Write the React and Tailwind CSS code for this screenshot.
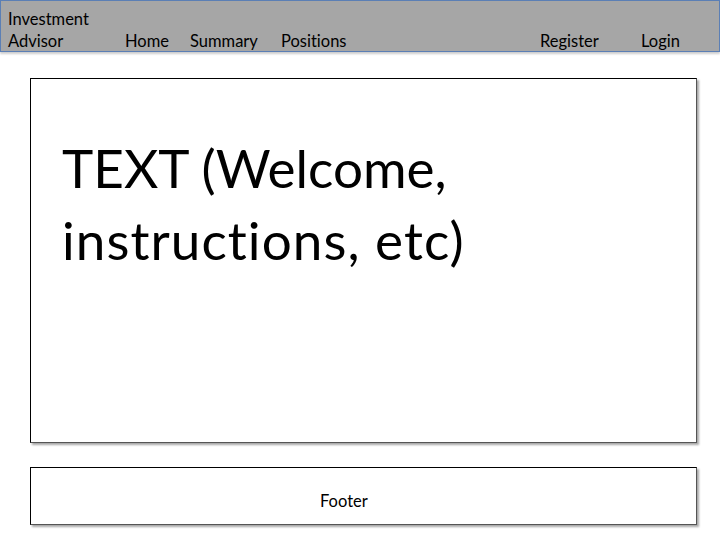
import React from 'react';

const navLeft = [
  { label: 'Home', cls: 'w-[65px]' },
  { label: 'Summary', cls: 'w-[91px]' },
  { label: 'Positions', cls: '' },
];

export default function App() {
  return (
    <div className="w-[720px] h-[540px] bg-white overflow-hidden [font-variant-ligatures:none]" style={{ fontFamily: 'Lato, "Open Sans", sans-serif' }}>
      <header className="h-[52px] bg-[#a6a6a6] border border-[#5b7fb5] shadow-[0_2px_2px_rgba(0,0,0,0.2)] flex items-start pt-[7px] text-[16.5px] text-black">
        <div className="pl-[7px] w-[124px] shrink-0 leading-[22px]">
          <div>Investment</div>
          <div>Advisor</div>
        </div>
        {navLeft.map((n) => (
          <span key={n.label} className={`${n.cls} mt-[22px] leading-[22px]`}>{n.label}</span>
        ))}
        <span className="ml-auto w-[101px] mt-[22px] leading-[22px]">Register</span>
        <span className="w-[78px] mt-[22px] leading-[22px]">Login</span>
      </header>

      <main className="ml-[30px] mt-[26px] w-[667px] h-[365px] border border-black border-r-[#555] border-b-[#555] shadow-[2px_2px_2px_rgba(0,0,0,0.35)] pl-[31px] pt-[53px]">
        <p className="text-[53px] leading-[72px] text-black">
          TEXT (Welcome,
          <br />
          <span className="tracking-[0.02em]">instructions, etc)</span>
        </p>
      </main>

      <footer className="ml-[30px] mt-[24px] w-[667px] h-[58px] border border-black border-r-[#555] border-b-[#555] shadow-[2px_2px_2px_rgba(0,0,0,0.35)] flex items-end pl-[289px] pb-[10px] text-[16.5px] text-black">
        Footer
      </footer>
    </div>
  );
}
